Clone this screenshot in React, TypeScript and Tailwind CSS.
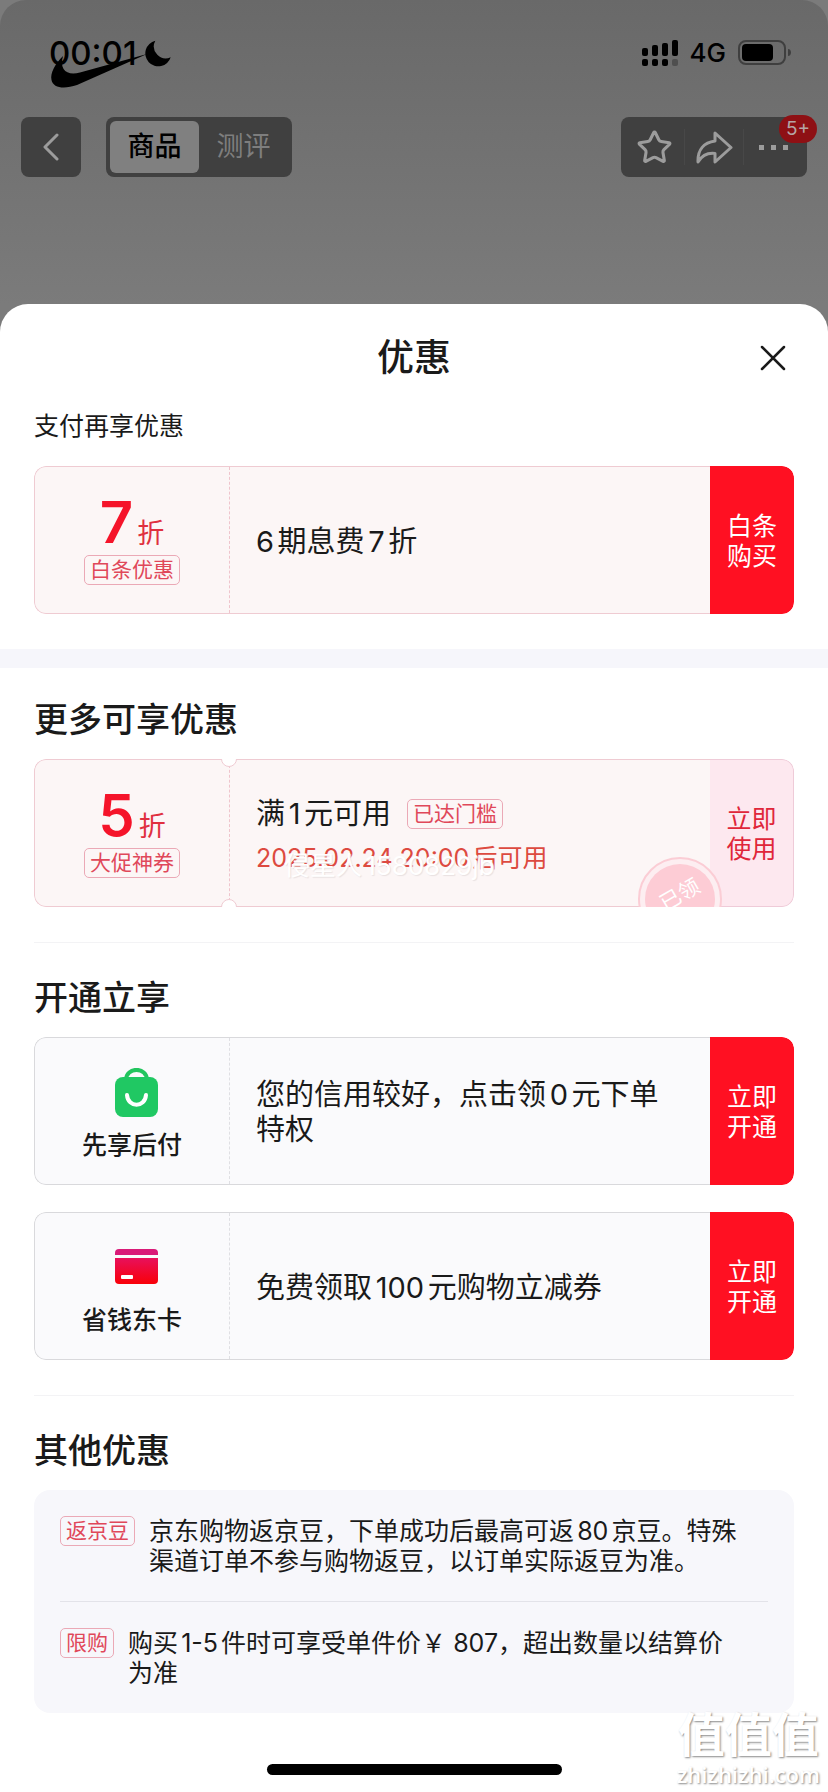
import type { ReactNode } from 'react';
import { Star } from 'lucide-react';

const notes = [
  {
    tag: '返京豆',
    lines: ['京东购物返京豆，下单成功后最高可返80京豆。特殊', '渠道订单不参与购物返豆，以订单实际返豆为准。'],
  },
  {
    tag: '限购',
    lines: ['购买1-5件时可享受单件价￥ 807，超出数量以结算价', '为准'],
  },
];

function Tag({ children }: { children: ReactNode }) {
  return (
    <span className="h-[30px] shrink-0 rounded-[5px] border border-[#eba9b6] px-[5px] text-[21px] leading-7 text-[#e0485a]">
      {children}
    </span>
  );
}

function StatusBar() {
  return (
    <div className="flex h-[34px] items-center justify-between pr-9 pl-[49px] text-black">
      <div className="relative flex items-center gap-2">
        <span className="text-[33px] leading-[34px] font-medium">00:01</span>
        <svg width="27" height="27" viewBox="0 0 27 27">
          <path d="M10.300 0.700A13 13 0 1 0 25.700 17.300A12 12 0 0 1 10.300 0.700Z" fill="#000" />
        </svg>
        <svg className="absolute top-[18px] left-px" width="98" height="36" viewBox="0 0 98 36">
          <path d="M13 2C5 10 0 19 1.500 26C3 34 14 35.500 27 31L97 0L30 18.500C17 22 9 16 13 2Z" fill="#000" />
        </svg>
      </div>
      <div className="flex items-center gap-3">
        <svg width="36" height="27" viewBox="0 0 36 27" fill="#000">
          <rect x="0" y="8" width="6" height="8" rx="2" />
          <rect x="10" y="5" width="6" height="11" rx="2" />
          <rect x="20" y="3" width="6" height="13" rx="2" />
          <rect x="30" y="0" width="6" height="16" rx="2" />
          <rect x="0" y="19" width="6" height="7" rx="2" />
          <rect x="10" y="19" width="6" height="7" rx="2" />
          <rect x="20" y="19" width="6" height="7" rx="2" />
          <rect x="30" y="19" width="6" height="7" rx="2" fill="#4f4f4f" />
        </svg>
        <span className="text-[26px] leading-8 font-medium">4G</span>
        <svg width="54" height="26" viewBox="0 0 54 26">
          <rect x="1" y="1" width="46" height="23" rx="7" fill="none" stroke="#3f3f3f" strokeWidth="2" />
          <rect x="4" y="4" width="31" height="17" rx="4" fill="#000" />
          <path d="M50 9C54 9 54 16 50 16Z" fill="#3f3f3f" />
        </svg>
      </div>
    </div>
  );
}

function NavBar() {
  return (
    <div className="mt-[47px] flex px-[21px]">
      <button aria-label="返回" className="flex size-[60px] items-center justify-center rounded-lg bg-[#404040]">
        <svg width="18" height="28" viewBox="0 0 18 28" fill="none" stroke="#9c9c9c" strokeWidth="3">
          <path d="M15 2L3 14L15 26" strokeLinecap="round" strokeLinejoin="round" />
        </svg>
      </button>
      <div className="ml-[25px] flex h-[60px] rounded-lg bg-[#404040] p-1 text-[27px]">
        <button className="w-[89px] rounded-md bg-[#808080] font-medium text-black">商品</button>
        <button className="w-[89px] text-[#7e7e7e]">测评</button>
      </div>
      <div className="relative ml-auto flex h-[60px] items-center rounded-lg bg-[#404040] px-1 text-[#9c9c9c]">
        <button aria-label="收藏" className="flex w-[59px] justify-center">
          <Star size={37} strokeWidth={2} />
        </button>
        <button aria-label="分享" className="flex h-9 w-[60px] items-center justify-center border-x border-[#484848]">
          <svg width="37" height="33" viewBox="0 0 37 33" fill="none" stroke="currentColor" strokeWidth="3" strokeLinejoin="round">
            <path d="M19 2L35 16.500L19 31V22.500C11 21.500 6 24.500 2 31C1.500 18.500 8 11.500 19 10Z" />
          </svg>
        </button>
        <button aria-label="更多" className="flex w-[59px] justify-center gap-[7px]">
          <i className="size-[5px] bg-current" />
          <i className="size-[5px] bg-current" />
          <i className="size-[5px] bg-current" />
        </button>
        <span className="absolute -top-[2px] -right-[10px] rounded-full bg-[#8e1014] px-[7px] text-[19px] leading-7 text-[#b5a5a5]">
          5+
        </span>
      </div>
    </div>
  );
}

type CouponProps = {
  left: ReactNode;
  children: ReactNode;
  action: [string, string];
  tone?: 'pink' | 'gray';
  claimed?: boolean;
};

function Coupon({ left, children, action, tone = 'pink', claimed = false }: CouponProps) {
  const body = tone === 'pink' ? 'border-[#efcbd2] bg-[#fcf6f6]' : 'border-[#d9d9dc] bg-[#fafafc]';
  const divider = tone === 'pink' ? 'border-[#efc4cc]' : 'border-[#dfdfe3]';
  const button = claimed ? 'border border-l-0 border-[#efcbd8] bg-[#fde8ef] text-[#e0263a]' : 'bg-[#ff1022] text-white';

  return (
    <div className="relative flex min-h-[148px] overflow-hidden rounded-xl">
      <div className={`flex min-w-0 flex-1 rounded-l-xl border border-r-0 ${body}`}>
        <div className={`flex w-[195px] shrink-0 flex-col items-center justify-center border-r border-dashed pt-[6px] ${divider}`}>
          {left}
        </div>
        <div className="flex flex-1 flex-col justify-center gap-2 pt-[2px] pr-6 pl-[26px] text-[29px] leading-[35px]">
          {children}
        </div>
      </div>
      <button className={`w-[84px] shrink-0 rounded-r-xl pt-[2px] text-[25px] leading-[30px] ${button}`}>
        {action[0]}
        <br />
        {action[1]}
      </button>
      {claimed && (
        <>
          <i className="absolute -top-2 left-[187px] size-4 rounded-full border border-[#efcbd2] bg-white" />
          <i className="absolute -bottom-2 left-[187px] size-4 rounded-full border border-[#efcbd2] bg-white" />
          <div className="absolute top-[98px] right-[72px] size-[84px] rounded-full border-2 border-[#fbcdd5] bg-[#fdeef1] p-[5px]">
            <div className="flex size-full items-center justify-center rounded-full bg-[#fdccd5] pb-2">
              <span className="-rotate-30 text-[21px] leading-6 text-white">已领</span>
            </div>
          </div>
        </>
      )}
    </div>
  );
}

function Discount({ value, label }: { value: string; label: string }) {
  return (
    <>
      <div className="flex items-baseline gap-1 leading-[42px] text-[#f5142a]">
        <span className="text-[58px] font-semibold">{value}</span>
        <span className="text-[27px] text-[#e0303f]">折</span>
      </div>
      <Tag>{label}</Tag>
    </>
  );
}

function BagIcon() {
  return (
    <svg width="52" height="50" viewBox="2 0 52 50">
      <path d="M22 12C22 -1.500 43 -1.500 43 12" fill="none" stroke="#22c55e" strokeWidth="4" />
      <rect x="11" y="9" width="43" height="40" rx="8" fill="#20c863" />
      <path d="M23 27C24 40 41 40 42 27" fill="none" stroke="#fff" strokeWidth="4" strokeLinecap="round" />
    </svg>
  );
}

function CardIcon() {
  return (
    <svg width="52" height="50" viewBox="2 0 52 50">
      <defs>
        <linearGradient id="card" x1="0" y1="0" x2="0" y2="1">
          <stop offset="0" stopColor="#e8105c" />
          <stop offset="1" stopColor="#f90008" />
        </linearGradient>
      </defs>
      <path d="M11 12V10Q11 6 15 6H50Q54 6 54 10V12Z" fill="#d91a78" />
      <path d="M11 15H54V37Q54 41 50 41H15Q11 41 11 37Z" fill="url(#card)" />
      <rect x="17" y="32" width="12" height="4" rx="1" fill="#fff" />
    </svg>
  );
}

function Heading({ children }: { children: ReactNode }) {
  return <h2 className="mb-[19px] text-[34px] leading-10 font-medium">{children}</h2>;
}

export default function App() {
  return (
    <div className="relative flex min-h-screen flex-col bg-[#7b7b7b] font-['Inter','Noto_Sans_CJK_SC',sans-serif] text-[#1a1a1a] [text-autospace:normal]">
      <header className="h-[304px] rounded-t-[26px] bg-linear-to-b from-[#696969] to-[#7b7b7b] pt-9">
        <StatusBar />
        <NavBar />
      </header>

      <main className="flex flex-1 flex-col rounded-t-[28px] bg-white">
        <div className="relative flex h-[108px] items-center justify-center">
          <h1 className="text-[37px] leading-[50px] font-medium">优惠</h1>
          <button aria-label="关闭" className="absolute right-[42px]">
            <svg width="26" height="26" viewBox="0 0 26 26" stroke="#1a1a1a" strokeWidth="2.500" strokeLinecap="round">
              <path d="M2 2L24 24M24 2L2 24" />
            </svg>
          </button>
        </div>

        <section className="px-[34px] pb-[35px]">
          <h2 className="mb-[26px] text-[25px] leading-7">支付再享优惠</h2>
          <Coupon left={<Discount value="7" label="白条优惠" />} action={['白条', '购买']}>
            <p>6期息费7折</p>
          </Coupon>
        </section>

        <div className="h-[19px] bg-[#f6f6fb]" />

        <div className="px-[34px] pt-8">
          <section className="border-b border-[#f3f3f5] pb-[35px]">
            <Heading>更多可享优惠</Heading>
            <Coupon left={<Discount value="5" label="大促神券" />} action={['立即', '使用']} claimed>
              <div className="flex items-center gap-4 leading-10">
                <p>满1元可用</p>
                <Tag>已达门槛</Tag>
              </div>
              <div className="relative text-[25px] leading-8 text-[#dd4a40]">
                2025.02.24 20:00后可用
                <span className="absolute top-2 left-7 text-[26px] whitespace-nowrap text-white [text-shadow:1px_1px_1px_#e9e2e2]">
                  侵星人1580829jb
                </span>
              </div>
            </Coupon>
          </section>

          <section className="border-b border-[#f3f3f5] pt-[35px] pb-[35px]">
            <Heading>开通立享</Heading>
            <div className="flex flex-col gap-[27px]">
              <Coupon
                tone="gray"
                action={['立即', '开通']}
                left={
                  <>
                    <BagIcon />
                    <p className="mt-3 text-[25px] leading-[30px] font-medium">先享后付</p>
                  </>
                }
              >
                <p>您的信用较好，点击领0元下单特权</p>
              </Coupon>
              <Coupon
                tone="gray"
                action={['立即', '开通']}
                left={
                  <>
                    <CardIcon />
                    <p className="mt-3 text-[25px] leading-[30px] font-medium">省钱东卡</p>
                  </>
                }
              >
                <p>免费领取100元购物立减券</p>
              </Coupon>
            </div>
          </section>

          <section className="pt-[35px]">
            <Heading>其他优惠</Heading>
            <div className="divide-y divide-[#e3e3e9] rounded-2xl bg-[#f7f7fb] px-[26px]">
              {notes.map((note) => (
                <div key={note.tag} className="flex items-start gap-[14px] pt-[26px] pb-[25px]">
                  <Tag>{note.tag}</Tag>
                  <p className="text-[25px] leading-[30px]">
                    {note.lines[0]}
                    <br />
                    {note.lines[1]}
                  </p>
                </div>
              ))}
            </div>
          </section>
        </div>

        <div className="mt-auto flex justify-center pt-10 pb-[17px]">
          <div className="h-[11px] w-[295px] rounded-full bg-black" />
        </div>
      </main>

      <div className="absolute right-2 bottom-1 text-center text-white [text-shadow:1px_1px_2px_#8a8a8a]">
        <p className="text-[47px] leading-[50px] font-bold">值值值</p>
        <p className="font-['Open_Sans',sans-serif] text-[22px] leading-7 font-semibold">zhizhizhi.com</p>
      </div>
    </div>
  );
}
